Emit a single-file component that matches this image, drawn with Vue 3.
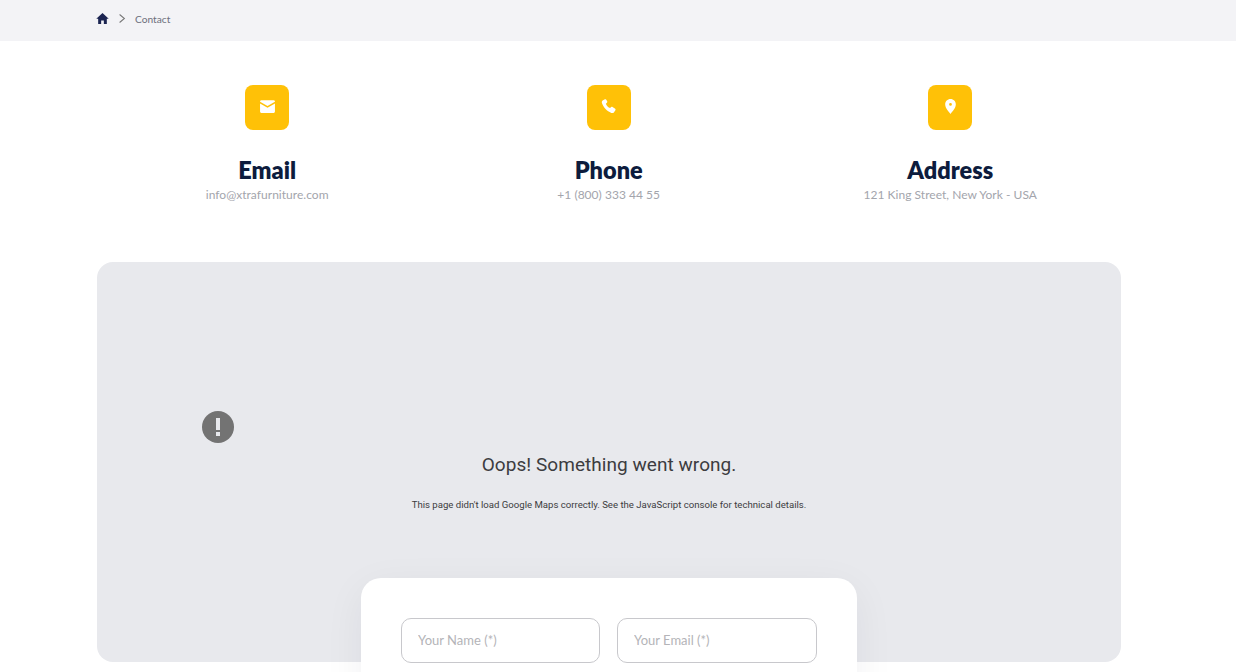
<template>
  <div class="page">
    <div class="crumbs">
      <div class="wrap crumbs-row">
        <svg class="home" viewBox="0 0 24 24" width="13" height="13"><path d="M12 2 0.5 12.5H4V22h5.5v-6.5h5V22H20v-9.5h3.5z" /></svg>
        <svg class="chev" viewBox="0 0 10 12" width="8" height="11"><path d="M2 1l6 5-6 5" /></svg>
        <span class="crumb-text">Contact</span>
      </div>
    </div>

    <div class="wrap">
      <div class="info-row">
        <div class="info" v-for="item in infos" :key="item.title">
          <div class="info-icon">
            <svg viewBox="0 0 16 16" width="17" height="17" v-html="item.icon"></svg>
          </div>
          <h3>{{ item.title }}</h3>
          <p>{{ item.text }}</p>
        </div>
      </div>

      <div class="map">
        <div class="map-icon"><span class="bang"></span><span class="dot"></span></div>
        <div class="map-title">Oops! Something went wrong.</div>
        <div class="map-text">This page didn't load Google Maps correctly. See the JavaScript console for technical details.</div>
      </div>

      <form class="card">
        <div class="fields">
          <input type="text" placeholder="Your Name (*)" />
          <input type="text" placeholder="Your Email (*)" />
        </div>
      </form>
    </div>
  </div>
</template>

<script setup>
  const infos = [
    {
      title: 'Email',
      text: 'info@xtrafurniture.com',
      icon: '<path d="M1 3.200C1 2.600 1.500 2 2.200 2h11.600c.7 0 1.200.6 1.200 1.200v.3L8 7.600 1 3.500z"/><path d="M1 5.100l7 4.100 7-4.100v7.700c0 .6-.5 1.200-1.200 1.200H2.200C1.500 14 1 13.400 1 12.800z"/>'
    },
    {
      title: 'Phone',
      text: '+1 (800) 333 44 55',
      icon: '<path d="M4.600 1.200 2.500 2.400C1.700 2.900 1.500 3.900 1.900 5c1.400 4 4.700 7.500 8.700 9 1.100.4 2 .2 2.600-.6l1.300-1.900c.3-.5.2-1-.2-1.300l-2.500-1.800c-.4-.3-.9-.2-1.300.1l-1 1c-1.700-.8-3.200-2.400-4-4.200l1-.9c.4-.4.5-.9.3-1.300L5.700 1.500c-.3-.4-.7-.5-1.100-.3z"/>'
    },
    {
      title: 'Address',
      text: '121 King Street, New York - USA',
      icon: '<path fill-rule="evenodd" d="M8 1C5.200 1 3 3.200 3 6c0 3.300 3.400 6.800 5 9 1.600-2.200 5-5.700 5-9 0-2.800-2.200-5-5-5zm0 6.300A1.300 1.300 0 1 1 8 4.700a1.300 1.300 0 0 1 0 2.600z"/>'
    }
  ]
</script>

<style scoped>
  .page {
    height: 672px;
    overflow: hidden;
    background: #fff;
    font-family: "Lato", "Noto Sans", sans-serif;
  }

  .wrap {
    width: 1024px;
    margin-left: 97px;
  }

  .crumbs {
    height: 41px;
    background: #f3f3f6;
  }

  .crumbs-row {
    display: flex;
    align-items: center;
    height: 37px;
  }

  .home {
    margin-left: -1px;
    fill: #1b2451;
  }

  .chev {
    margin-left: 9px;
    fill: none;
    stroke: #777;
    stroke-width: 1.3;
  }

  .crumb-text {
    margin-left: 9px;
    font-size: 10.2px;
    color: #6d6f7c;
  }

  .info-row {
    display: grid;
    grid-template-columns: repeat(3, 1fr);
    margin-left: -0.6px;
    padding-top: 44px;
    height: 221px;
    box-sizing: border-box;
  }

  .info {
    display: flex;
    flex-direction: column;
    align-items: center;
  }

  .info-icon {
    display: flex;
    align-items: center;
    justify-content: center;
    width: 44px;
    height: 45px;
    box-sizing: border-box;
    padding-bottom: 2px;
    border-radius: 8px;
    background: #ffc107;
    fill: #fff;
  }

  h3 {
    margin: 25px 0 0;
    font-size: 23.5px;
    line-height: 30px;
    font-weight: 800;
    color: #0d1c3d;
  }

  p {
    margin: 1px 0 0;
    font-size: 12px;
    letter-spacing: 0.03px;
    line-height: 18px;
    color: #a3a5ac;
  }

  .map {
    display: flex;
    flex-direction: column;
    align-items: center;
    height: 400px;
    box-sizing: border-box;
    padding-top: 149px;
    border-radius: 16px;
    background: #e8e9ed;
    font-family: Roboto, sans-serif;
  }

  .map-icon {
    align-self: flex-start;
    display: flex;
    flex-direction: column;
    align-items: center;
    justify-content: center;
    gap: 2px;
    width: 32px;
    height: 32px;
    margin-left: 105px;
    border-radius: 50%;
    background: #737373;
  }

  .bang {
    width: 4px;
    height: 12px;
    background: #e8e9ed;
  }

  .dot {
    width: 4px;
    height: 4px;
    background: #e8e9ed;
  }

  .map-title {
    margin-top: 10px;
    font-size: 19px;
    line-height: 24px;
    letter-spacing: 0.05px;
    color: #3c3c40;
  }

  .map-text {
    margin-top: 21px;
    font-size: 9.6px;
    line-height: 14px;
    color: #3c3c40;
  }

  .card {
    width: 496px;
    box-sizing: border-box;
    margin: -84px auto 0;
    padding: 40px 40px 60px;
    border-radius: 20px;
    background: #fff;
    box-shadow: 0 10px 40px rgba(20, 25, 50, 0.06);
    position: relative;
  }

  .fields {
    display: grid;
    grid-template-columns: 199px 200px;
    gap: 17px;
  }

  input {
    width: 100%;
    height: 45px;
    box-sizing: border-box;
    padding: 0 16px 2px;
    border: 1px solid #c8c8cc;
    border-radius: 10px;
    background: #fff;
    outline: none;
    font-family: "Lato", "Noto Sans", sans-serif;
    font-size: 13px;
  }

  input::placeholder {
    color: #b4b4b8;
  }
</style>

<style>
  html,
  body {
    overflow: hidden;
  }
</style>
